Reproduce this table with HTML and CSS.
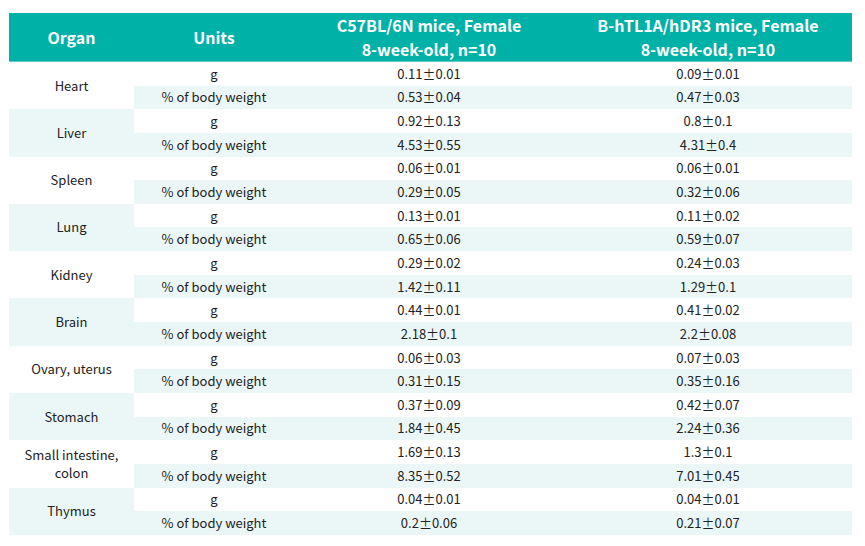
FILE: index.html
```html
<!DOCTYPE html>
<html>
<head>
<meta charset="utf-8">
<link rel="stylesheet" href="styles.css">
</head>
<body>
<table class="organs">
  <colgroup>
    <col class="c-organ"><col class="c-units"><col class="c-a"><col class="c-b">
  </colgroup>
  <thead>
    <tr>
      <th>Organ</th>
      <th>Units</th>
      <th>C57BL/6N mice, Female<br>8-week-old, n=10</th>
      <th>B-hTL1A/hDR3 mice, Female<br>8-week-old, n=10</th>
    </tr>
  </thead>
  <tbody>
    <tr class="g"><td class="organ" rowspan="2">Heart</td><td>g</td><td>0.11±0.01</td><td>0.09±0.01</td></tr>
    <tr class="pct"><td>% of body weight</td><td>0.53±0.04</td><td>0.47±0.03</td></tr>
    <tr class="g"><td class="organ alt" rowspan="2">Liver</td><td>g</td><td>0.92±0.13</td><td>0.8±0.1</td></tr>
    <tr class="pct"><td>% of body weight</td><td>4.53±0.55</td><td>4.31±0.4</td></tr>
    <tr class="g"><td class="organ" rowspan="2">Spleen</td><td>g</td><td>0.06±0.01</td><td>0.06±0.01</td></tr>
    <tr class="pct"><td>% of body weight</td><td>0.29±0.05</td><td>0.32±0.06</td></tr>
    <tr class="g"><td class="organ alt" rowspan="2">Lung</td><td>g</td><td>0.13±0.01</td><td>0.11±0.02</td></tr>
    <tr class="pct"><td>% of body weight</td><td>0.65±0.06</td><td>0.59±0.07</td></tr>
    <tr class="g"><td class="organ" rowspan="2">Kidney</td><td>g</td><td>0.29±0.02</td><td>0.24±0.03</td></tr>
    <tr class="pct"><td>% of body weight</td><td>1.42±0.11</td><td>1.29±0.1</td></tr>
    <tr class="g"><td class="organ alt" rowspan="2">Brain</td><td>g</td><td>0.44±0.01</td><td>0.41±0.02</td></tr>
    <tr class="pct"><td>% of body weight</td><td>2.18±0.1</td><td>2.2±0.08</td></tr>
    <tr class="g"><td class="organ" rowspan="2">Ovary, uterus</td><td>g</td><td>0.06±0.03</td><td>0.07±0.03</td></tr>
    <tr class="pct"><td>% of body weight</td><td>0.31±0.15</td><td>0.35±0.16</td></tr>
    <tr class="g"><td class="organ alt" rowspan="2">Stomach</td><td>g</td><td>0.37±0.09</td><td>0.42±0.07</td></tr>
    <tr class="pct"><td>% of body weight</td><td>1.84±0.45</td><td>2.24±0.36</td></tr>
    <tr class="g"><td class="organ" rowspan="2">Small intestine,<br>colon</td><td>g</td><td>1.69±0.13</td><td>1.3±0.1</td></tr>
    <tr class="pct"><td>% of body weight</td><td>8.35±0.52</td><td>7.01±0.45</td></tr>
    <tr class="g"><td class="organ alt" rowspan="2">Thymus</td><td>g</td><td>0.04±0.01</td><td>0.04±0.01</td></tr>
    <tr class="pct"><td>% of body weight</td><td>0.2±0.06</td><td>0.21±0.07</td></tr>
  </tbody>
</table>
</body>
</html>
```
FILE: styles.css
```css
html, body {
  margin: 0;
  padding: 0;
  background: #ffffff;
}
body {
  padding: 13px 0 0 9px;
  font-family: "Noto Sans CJK SC", "Noto Sans", sans-serif;
  color: #222222;
}
.organs {
  border-collapse: collapse;
  border-spacing: 0;
  width: 843px;
  table-layout: fixed;
}
.c-organ { width: 125px; }
.c-units { width: 160px; }
.c-a { width: 270px; }
.c-b { width: 288px; }
.organs th {
  background: #00b1a8;
  color: #ffffff;
  font-weight: 700;
  font-size: 16px;
  line-height: 24px;
  height: 47px;
  padding: 0;
  text-align: center;
  border-bottom: 1px solid #5fcdc6;
}
.organs td {
  padding: 0;
  height: 23.65px;
  font-size: 13px;
  line-height: 16px;
  text-align: center;
  vertical-align: middle;
}
.organs tr.pct td { background: #ebf7f7; }
.organs td.organ {
  background: #ffffff;
  line-height: 18px;
}
.organs td.organ.alt { background: #ebf7f7; }
```
